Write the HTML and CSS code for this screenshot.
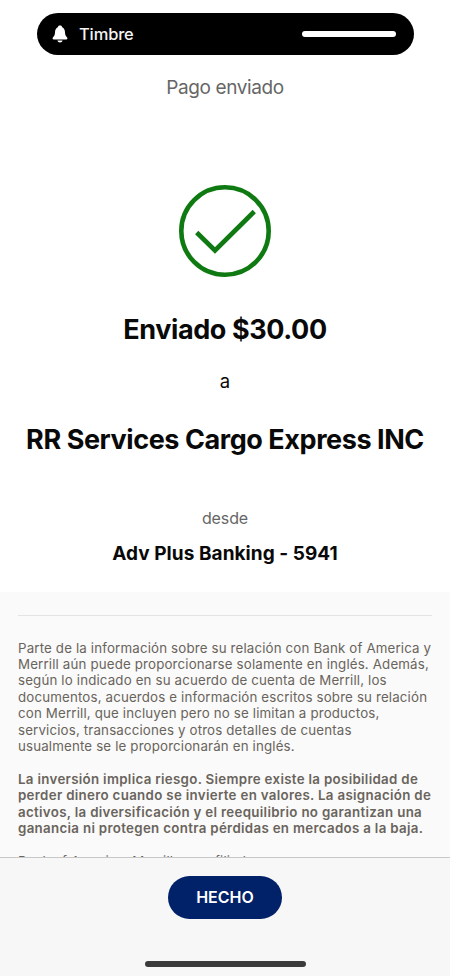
FILE: index.html
```html
<!DOCTYPE html>
<html lang="es">
<head>
<meta charset="utf-8">
<title>Pago enviado</title>
<link rel="stylesheet" href="styles.css">
</head>
<body>
<div class="screen">
  <div class="island">
    <svg class="bell" viewBox="0 0 16 18"><path d="M8 .5C9.300 .5 10 1.200 10.200 2.200C12 3.100 12.900 4.900 13 7.200C13.100 9.900 13.700 10.900 14.800 12C15.900 13.200 15.500 14.600 14.200 14.600H1.800C.5 14.600 .1 13.200 1.200 12C2.300 10.900 2.900 9.900 3 7.200C3.100 4.900 4 3.100 5.800 2.200C6 1.200 6.700 .5 8 .5ZM5.400 15.400H10.600C10.300 16.700 9.300 17.400 8 17.400S5.700 16.700 5.400 15.400Z"/></svg>
    <span class="island-label">Timbre</span>
    <span class="volume"></span>
  </div>
  <h1 class="title">Pago enviado</h1>
  <main class="receipt">
    <svg class="check" viewBox="0 0 92 92"><circle cx="46" cy="46" r="43.700"/><path d="M17.700 47.500L36 65.500L75.300 26.500"/></svg>
    <p class="amount">Enviado $30.00</p>
    <p class="to">a</p>
    <p class="payee">RR Services Cargo Express INC</p>
    <p class="from">desde</p>
    <p class="account">Adv Plus Banking - 5941</p>
  </main>
  <section class="legal">
    <p class="notice">Parte de la información sobre su relación con Bank of America y<br>Merrill aún puede proporcionarse solamente en inglés. Además,<br>según lo indicado en su acuerdo de cuenta de Merrill, los<br>documentos, acuerdos e información escritos sobre su relación<br>con Merrill, que incluyen pero no se limitan a productos,<br>servicios, transacciones y otros detalles de cuentas<br>usualmente se le proporcionarán en inglés.</p>
    <p class="notice risk">La inversión implica riesgo. Siempre existe la posibilidad de<br>perder dinero cuando se invierte en valores. La asignación de<br>activos, la diversificación y el reequilibrio no garantizan una<br>ganancia ni protegen contra pérdidas en mercados a la baja.</p>
    <p class="notice">Bank of America, Merrill, sus afiliadas</p>
  </section>
  <footer class="bar">
    <button class="done">HECHO</button>
    <div class="home"></div>
  </footer>
</div>
</body>
</html>
```
FILE: styles.css
```css
* { box-sizing: border-box; margin: 0; padding: 0; }
body { background: #fff; font-family: Inter, "Liberation Sans", sans-serif; color: #090909; }
.screen { width: 450px; height: 976px; overflow: hidden; display: flex; flex-direction: column; }
.island { flex: none; display: flex; align-items: center; width: 377px; height: 42px; margin: 13px 0 0 37px; padding: 0 18px 0 15px; border-radius: 21px; background: #000; }
.bell { width: 16px; height: 18px; fill: #fff; }
.island-label { margin-left: 11px; color: #f4f4f4; font-size: 16.5px; font-weight: 500; letter-spacing: -0.15px; }
.volume { width: 94px; height: 6px; margin-left: auto; border-radius: 3px; background: #fff; }
.title { flex: none; height: 24px; margin-top: 21px; text-align: center; font-size: 19px; line-height: 24px; font-weight: 400; letter-spacing: -0.4px; color: #666; }
.receipt { flex: none; height: 492px; padding-top: 85px; display: flex; flex-direction: column; align-items: center; white-space: nowrap; }
.check { flex: none; width: 92px; height: 92px; fill: none; stroke: #107a12; stroke-width: 4.6px; }
.amount, .payee { font-size: 27px; line-height: 34px; font-weight: 700; }
.amount { margin-top: 36px; letter-spacing: -0.4px; }
.to { margin-top: 22px; font-size: 18.5px; line-height: 24px; }
.payee { margin-top: 30px; letter-spacing: -0.43px; }
.from { margin-top: 50px; font-size: 16px; line-height: 22px; letter-spacing: -0.1px; color: #666; }
.account { margin-top: 13px; font-size: 19px; line-height: 24px; font-weight: 700; letter-spacing: 0.05px; }
.legal { flex: none; height: 265px; padding: 23px 18px 0; overflow: hidden; background: #fafafa; }
.legal::before { content: ""; display: block; height: 1px; margin-bottom: 23.5px; background: #e4e4e4; }
.notice { margin-bottom: 16.4px; font-size: 13.3px; line-height: 16.4px; letter-spacing: 0.16px; color: #69645c; white-space: nowrap; }
.risk { font-weight: 600; letter-spacing: 0.32px; }
.bar { flex: 1; display: flex; flex-direction: column; align-items: center; padding-top: 18px; border-top: 1px solid #c8c8c8; background: #f7f7f7; }
.done { width: 114px; height: 43px; padding-bottom: 2px; border: 0; border-radius: 22px; background: #012169; color: #fff; font: 600 16px Inter, sans-serif; }
.home { width: 161px; height: 6px; margin-top: 42px; border-radius: 3px; background: #3b3b3b; }
```
